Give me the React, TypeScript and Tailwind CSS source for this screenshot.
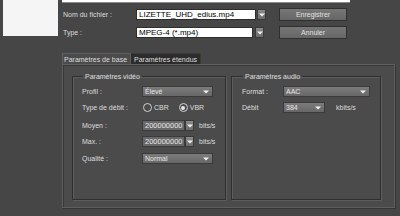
import React from "react";

const font = { fontFamily: '"Liberation Sans", Arial, sans-serif' };

function Arrow() {
  return (
    <svg width="6" height="4" viewBox="0 0 6 4" className="block">
      <path d="M0 0.5 H6 L3 3.5 Z" fill="#f2f2f2" />
    </svg>
  );
}

function DropButton({ className = "" }: { className?: string }) {
  return (
    <div
      className={`flex items-end justify-center pb-[2px] border border-[#3a3a3a] bg-gradient-to-b from-[#8a8a8a] to-[#6c6c6c] ${className}`}
    >
      <Arrow />
    </div>
  );
}

function Select({ value, width }: { value: string; width: string }) {
  return (
    <div
      className={`${width} h-[11px] flex items-center justify-between pl-[2px] pr-[3px] border border-[#3a3a3a] bg-gradient-to-b from-[#7c7c7c] to-[#676767] text-[7px] text-[#e8e8e8] leading-none`}
    >
      <span>{value}</span>
      <Arrow />
    </div>
  );
}

function Spin({ value }: { value: string }) {
  return (
    <div className="flex h-[11px]">
      <div className="w-[43px] h-full flex items-center pl-[2px] border border-[#3a3a3a] bg-[#686868] text-[7.5px] text-[#e8e8e8] leading-none">
        {value}
      </div>
      <DropButton className="w-[9px] h-full" />
    </div>
  );
}

function Radio({ label, checked }: { label: string; checked?: boolean }) {
  return (
    <div className="flex items-center gap-[2px]">
      <div className="w-[9px] h-[9px] rounded-full border border-[#cfcfcf] flex items-center justify-center">
        {checked && <div className="w-[4px] h-[4px] rounded-full bg-[#e6e6e6]" />}
      </div>
      <span>{label}</span>
    </div>
  );
}

function Row({ label, children, mt }: { label: string; children: React.ReactNode; mt: string }) {
  return (
    <div className={`flex items-center h-[11px] ${mt}`}>
      <span className="w-[60px] shrink-0">{label}</span>
      {children}
    </div>
  );
}

export default function App() {
  return (
    <div
      className="w-[400px] h-[216px] overflow-hidden bg-[#464646] flex text-[#dedede] text-[7px] leading-none whitespace-nowrap"
      style={font}
    >
      {/* preview */}
      <div className="ml-[3px] w-[55px] h-[36px] bg-[#f5f5f5] shrink-0" />

      <div className="ml-[4px] w-[333px] flex flex-col shrink-0">
        <div className="w-[288px] h-[3px] shrink-0 bg-white border-b border-[#8a8a8a]" />

        {/* Nom du fichier */}
        <div className="flex items-center h-[13px] mt-[5px] shrink-0">
          <span className="w-[74px] pl-[1px]">Nom du fichier :</span>
          <div className="w-[120px] h-[11px] flex items-center pl-[2px] bg-white border border-[#2e2e2e] text-[8px] text-black">
            LIZETTE_UHD_edius.mp4
          </div>
          <DropButton className="ml-[1px] w-[9px] h-[11px]" />
          <button className="ml-[13px] w-[68px] h-[13px] border border-[#2f2f2f] bg-gradient-to-b from-[#777] to-[#666] text-[7px] text-[#e0e0e0]">
            Enregistrer
          </button>
        </div>

        {/* Type */}
        <div className="flex items-center h-[13px] mt-[5px] shrink-0">
          <span className="w-[74px] pl-[1px]">Type :</span>
          <div className="w-[117px] h-[11px] flex items-center pl-[2px] bg-white border border-[#2e2e2e] text-[8px] text-black">
            MPEG-4 (*.mp4)
          </div>
          <DropButton className="ml-[2px] w-[9px] h-[11px]" />
          <button className="ml-[15px] w-[68px] h-[13px] border border-[#2f2f2f] bg-gradient-to-b from-[#777] to-[#666] text-[7px] text-[#e0e0e0]">
            Annuler
          </button>
        </div>

        {/* tabs */}
        <div className="flex mt-[14px] h-[11px] items-stretch shrink-0">
          <div className="w-[69px] flex items-center pl-[1px] bg-[#4b4b4b] border-t border-l border-r border-[#5e5e5e]">
            Paramètres de base
          </div>
          <div className="w-[70px] flex items-center pl-[3px] bg-[#2c2c2c] border-t border-r border-[#3a3a3a]">
            Paramètres étendus
          </div>
        </div>

        {/* panel */}
        <div className="h-[144px] shrink-0 bg-[#4b4b4b] border border-[#5e5e5e] shadow-[inset_1px_1px_0_#383838,1px_1px_0_#353535] flex items-start gap-[5px] pl-[9px] pt-[8px]">
          <fieldset className="w-[154px] h-[127px] border border-[#2f2f2f] shadow-[inset_1px_1px_0_#5d5d5d,1px_1px_0_#5d5d5d] px-[9px]">
            <legend className="px-[2px] ml-[1px]">Paramètres vidéo</legend>
            <Row label="Profil :" mt="mt-[6px]">
              <Select value="Élevé" width="w-[71px]" />
            </Row>
            <Row label="Type de débit :" mt="mt-[5px]">
              <div className="flex gap-[10px] pl-[1px]">
                <Radio label="CBR" />
                <Radio label="VBR" checked />
              </div>
            </Row>
            <Row label="Moyen :" mt="mt-[7px]">
              <Spin value="200000000" />
              <span className="ml-[5px]">bits/s</span>
            </Row>
            <Row label="Max. :" mt="mt-[5px]">
              <Spin value="200000000" />
              <span className="ml-[5px]">bits/s</span>
            </Row>
            <Row label="Qualité :" mt="mt-[6px]">
              <Select value="Normal" width="w-[71px]" />
            </Row>
          </fieldset>

          <fieldset className="w-[146px] h-[127px] border border-[#2f2f2f] shadow-[inset_1px_1px_0_#5d5d5d,1px_1px_0_#5d5d5d] px-[10px]">
            <legend className="px-[2px] ml-[1px]">Paramètres audio</legend>
            <div className="flex items-center h-[11px] mt-[6px]">
              <span className="w-[41px] shrink-0">Format :</span>
              <Select value="AAC" width="w-[87px]" />
            </div>
            <div className="flex items-center h-[11px] mt-[5px]">
              <span className="w-[41px] shrink-0">Débit</span>
              <Select value="384" width="w-[42px]" />
              <span className="ml-[11px]">kbits/s</span>
            </div>
          </fieldset>
        </div>
      </div>
    </div>
  );
}
